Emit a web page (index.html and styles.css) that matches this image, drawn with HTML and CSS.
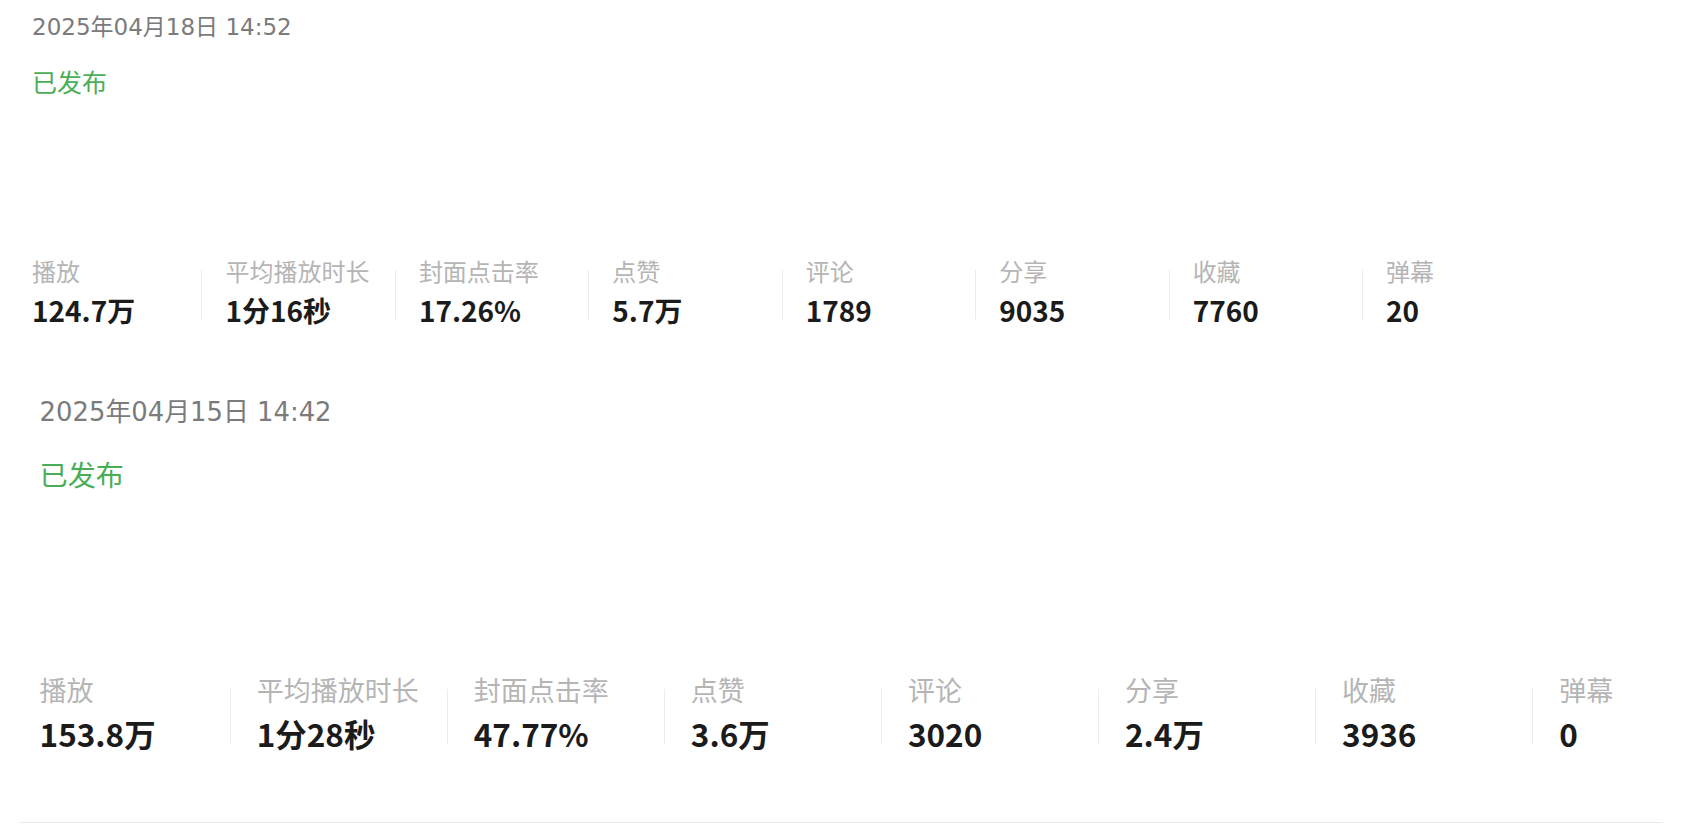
FILE: index.html
```html
<!DOCTYPE html>
<html lang="zh-CN">
<head>
<meta charset="utf-8">
<title>作品数据</title>
<link rel="stylesheet" href="styles.css">
</head>
<body>
<section class="post">
  <div class="date">2025年04月18日 14:52</div>
  <div class="status">已发布</div>
  <div class="stats">
    <div class="stat"><div class="label">播放</div><div class="value">124.7万</div></div>
    <div class="stat"><div class="label">平均播放时长</div><div class="value">1分16秒</div></div>
    <div class="stat"><div class="label">封面点击率</div><div class="value">17.26%</div></div>
    <div class="stat"><div class="label">点赞</div><div class="value">5.7万</div></div>
    <div class="stat"><div class="label">评论</div><div class="value">1789</div></div>
    <div class="stat"><div class="label">分享</div><div class="value">9035</div></div>
    <div class="stat"><div class="label">收藏</div><div class="value">7760</div></div>
    <div class="stat"><div class="label">弹幕</div><div class="value">20</div></div>
  </div>
</section>
<section class="post post--large">
  <div class="date">2025年04月15日 14:42</div>
  <div class="status">已发布</div>
  <div class="stats">
    <div class="stat"><div class="label">播放</div><div class="value">153.8万</div></div>
    <div class="stat"><div class="label">平均播放时长</div><div class="value">1分28秒</div></div>
    <div class="stat"><div class="label">封面点击率</div><div class="value">47.77%</div></div>
    <div class="stat"><div class="label">点赞</div><div class="value">3.6万</div></div>
    <div class="stat"><div class="label">评论</div><div class="value">3020</div></div>
    <div class="stat"><div class="label">分享</div><div class="value">2.4万</div></div>
    <div class="stat"><div class="label">收藏</div><div class="value">3936</div></div>
    <div class="stat"><div class="label">弹幕</div><div class="value">0</div></div>
  </div>
</section>
<div class="rule"></div>
</body>
</html>
```
FILE: styles.css
```css
html, body {
  margin: 0;
  padding: 0;
  background: #ffffff;
}

body {
  font-family: "Noto Sans CJK SC", "Noto Sans", sans-serif;
  width: 1684px;
  overflow: hidden;
}

.post {
  font-size: 16px;
  height: 23.875em;
  box-sizing: border-box;
  padding: 0.67em 0 0 2em;
}

.post--large {
  font-size: 18px;
  padding-left: 2.2em;
}

.post--large .stats {
  margin-top: 9.85em;
}

.post--large .stat {
  flex-basis: 12.06em;
}

.date {
  font-family: "DejaVu Sans", "Noto Sans CJK SC", sans-serif;
  font-size: 1.4375em;
  line-height: 1.4;
  color: #7b7b7b;
  white-space: nowrap;
}

.status {
  font-size: 1.5625em;
  line-height: 1.4;
  margin-top: 0.84em;
  color: #4aae57;
}

.stats {
  display: flex;
  margin-top: 9.7em;
  margin-left: -1.5em;
}

.stat {
  flex: 0 0 12.09em;
  box-sizing: border-box;
  padding-left: 1.5em;
  background-image: linear-gradient(#ececec, #ececec);
  background-repeat: no-repeat;
  background-size: 1px 3.1em;
  background-position: left 0 top 1em;
}

.stat:first-child {
  background-image: none;
}

.label {
  font-size: 1.5em;
  line-height: 1.4;
  color: #b5b5b5;
  white-space: nowrap;
}

.value {
  font-size: 1.75em;
  line-height: 1.3;
  margin-top: 0.14em;
  font-weight: 700;
  color: #1b1b1b;
  white-space: nowrap;
}

.rule {
  margin: 10px 21px 0 19px;
  border-top: 1px solid #ebebeb;
  box-shadow: 0 1px 2px rgba(0, 0, 0, 0.03);
}
```
